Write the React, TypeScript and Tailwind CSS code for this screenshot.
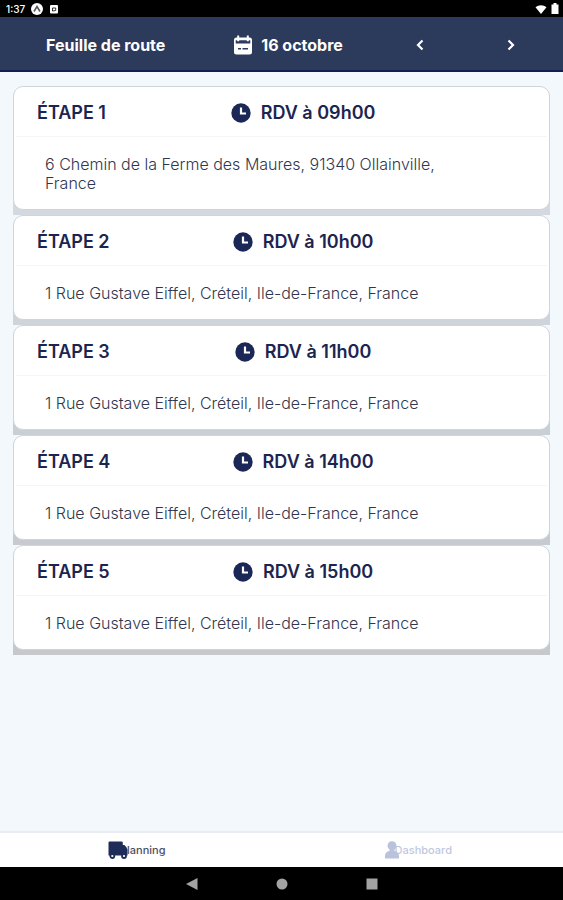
type Step = {
  id: number;
  time: string;
  address: string;
  edge: string;
};

const CRETEIL = "1 Rue Gustave Eiffel, Créteil, Ile-de-France, France";

const steps: Step[] = [
  {
    id: 1,
    time: "09h00",
    address: "6 Chemin de la Ferme des Maures, 91340 Ollainville, France",
    edge: "bg-[#d3d9df]",
  },
  { id: 2, time: "10h00", address: CRETEIL, edge: "bg-[#cfd4da]" },
  { id: 3, time: "11h00", address: CRETEIL, edge: "bg-[#cacfd4]" },
  { id: 4, time: "14h00", address: CRETEIL, edge: "bg-[#c7cbcf]" },
  { id: 5, time: "15h00", address: CRETEIL, edge: "bg-[#c6c9cc]" },
];

const ClockIcon = () => (
  <svg viewBox="0 0 20 20" className="size-5 shrink-0" aria-hidden="true">
    <circle cx="10" cy="10" r="9.7" fill="#1b2756" />
    <path d="M10 4.5v6h5" fill="none" stroke="#fff" strokeWidth="2.2" />
  </svg>
);

const CalendarIcon = () => (
  <svg viewBox="0 0 20 20" className="size-5 shrink-0" aria-hidden="true">
    <path
      fill="#fff"
      fillRule="evenodd"
      d="M4.2.5h2v2h7.6v-2h2v2h.7A2.5 2.5 0 0 1 19 5v12a2.5 2.5 0 0 1-2.5 2.5h-13A2.5 2.5 0 0 1 1 17V5a2.5 2.5 0 0 1 2.5-2.5h.7zM2.7 5.2v3.3h14.6V5.2h-1.5v1h-2v-1H6.2v1h-2v-1zM5 13v1.5h3V13zm4.5 0v1.5H15V13z"
    />
  </svg>
);

const TruckIcon = () => (
  <svg viewBox="0 0 20 18" className="relative h-[18px] w-5 shrink-0" aria-hidden="true">
    <path
      fill="#1f2c5a"
      d="M1.5.5h12A1.3 1.3 0 0 1 14.8 1.8V4h1.7l3 4.2v6.3H.5v-13A1 1 0 0 1 1.5.5z"
    />
    <circle cx="4.3" cy="15" r="2" fill="#fff" stroke="#1f2c5a" strokeWidth="1.8" />
    <circle cx="16" cy="15" r="2" fill="#fff" stroke="#1f2c5a" strokeWidth="1.8" />
  </svg>
);

const PersonIcon = () => (
  <svg viewBox="0 0 14 18" className="relative h-[18px] w-3.5 shrink-0" aria-hidden="true">
    <path
      fill="#b9c3dc"
      d="M7 .2a4.5 4.5 0 0 1 2.5 8.2v1.7c2.7.5 4.5 2.2 4.500 4.700V17.500H0v-2.700c0-2.500 1.800-4.200 4.500-4.700V8.400A4.500 4.500 0 0 1 7 .2z"
    />
  </svg>
);

const Chevron = ({ d }: { d: string }) => (
  <svg viewBox="0 0 12 12" className="size-3" aria-hidden="true">
    <path d={d} fill="none" stroke="#fff" strokeWidth="2.2" />
  </svg>
);

const StatusBar = () => (
  <div className="flex h-[17px] items-center justify-between bg-black pl-1.5 pr-1 text-white">
    <div className="flex items-center gap-1.5">
      <span className="text-[10px] font-medium leading-none">1:37</span>
      <svg viewBox="0 0 12 12" className="size-3" aria-hidden="true">
        <circle cx="6" cy="6" r="6" fill="#fff" />
        <path d="M3 8.5 6 3.5l3 5" fill="none" stroke="#555" strokeWidth="1.5" />
      </svg>
      <svg viewBox="0 0 10 10" className="size-2.5" aria-hidden="true">
        <rect x="1" y="1" width="8" height="8.5" rx="1" fill="#fff" />
        <path d="M3.5 7V4h3.2v2.5z" fill="none" stroke="#333" />
      </svg>
    </div>
    <div className="flex items-center gap-1">
      <svg viewBox="0 0 12 10" className="h-2.5 w-3" aria-hidden="true">
        <path d="M6 10 .5 3.2C3.5.5 8.5.5 11.5 3.2z" fill="#fff" />
      </svg>
      <svg viewBox="0 0 8 11" className="h-[11px] w-2" aria-hidden="true">
        <path d="M.5 1.5h2V0h3v1.5h2V11h-7z" fill="#fff" />
      </svg>
    </div>
  </div>
);

const StepCard = ({ step }: { step: Step }) => (
  <li className={`rounded-t-xl pb-[5px] ${step.edge}`}>
    <article className="rounded-[10px] border border-[#cfd5dc] bg-white">
      <div className="mx-0.5 grid h-[50px] grid-cols-[12fr_13fr_9fr] items-center border-b border-[#f3f5f7] px-[21px] pt-0.5 text-lg font-semibold text-[#1c2550]">
        <h2>ÉTAPE {step.id}</h2>
        <p className="flex items-center justify-center gap-2.5 whitespace-nowrap">
          <ClockIcon />
          RDV à {step.time}
        </p>
      </div>
      <p className="pb-4 pl-[31px] pr-24 pt-[18px] text-base font-light leading-[19px] text-[#31364f]">
        {step.address}
      </p>
    </article>
  </li>
);

const App = () => {
  return (
    <div className="flex min-h-screen flex-col bg-[#f3f8fc] font-['Inter',sans-serif]">
      <StatusBar />

      <header className="grid h-[55px] grid-cols-[21fr_19fr_10fr_10fr] items-center border-b-2 border-[#141c50] bg-[#2c3a5c] pl-2.5 pr-1.5 pt-0.5 text-base font-bold text-white">
        <h1 className="text-center">Feuille de route</h1>
        <p className="flex items-center justify-center gap-2">
          <CalendarIcon />
          16 octobre
        </p>
        <button type="button" aria-label="Jour précédent" className="flex justify-center py-2">
          <Chevron d="M8.5 1.5 4 6l4.5 4.5" />
        </button>
        <button type="button" aria-label="Jour suivant" className="flex justify-center py-2">
          <Chevron d="M3.5 1.5 8 6l-4.5 4.5" />
        </button>
      </header>

      <main className="flex-1 px-[13px] pt-3.5">
        <ul className="flex flex-col">
          {steps.map((step) => (
            <StepCard key={step.id} step={step} />
          ))}
        </ul>
      </main>

      <nav className="grid h-9 grid-cols-2 border-t-2 border-[#e9edf1] bg-white text-[11px] font-medium">
        <a href="#planning" className="flex items-center justify-center pr-2 text-[#4b5063]">
          <TruckIcon />
          <span className="-ml-2">Planning</span>
        </a>
        <a href="#dashboard" className="flex items-center justify-center pr-2 text-[#bfc8de]">
          <PersonIcon />
          <span className="-ml-1">Dashboard</span>
        </a>
      </nav>

      <div className="flex h-[33px] items-center justify-center gap-[78px] bg-black">
        <button type="button" aria-label="Retour">
          <svg viewBox="0 0 12 12" className="size-3">
            <path d="M0 6 11.5 0v12z" fill="#a3a3a3" />
          </svg>
        </button>
        <button type="button" aria-label="Accueil">
          <svg viewBox="0 0 12 12" className="size-3">
            <circle cx="6" cy="6" r="5.5" fill="#a3a3a3" />
          </svg>
        </button>
        <button type="button" aria-label="Applications récentes">
          <svg viewBox="0 0 12 12" className="size-3">
            <rect x=".5" y=".5" width="11" height="11" fill="#a3a3a3" />
          </svg>
        </button>
      </div>
    </div>
  );
};

export default App;
